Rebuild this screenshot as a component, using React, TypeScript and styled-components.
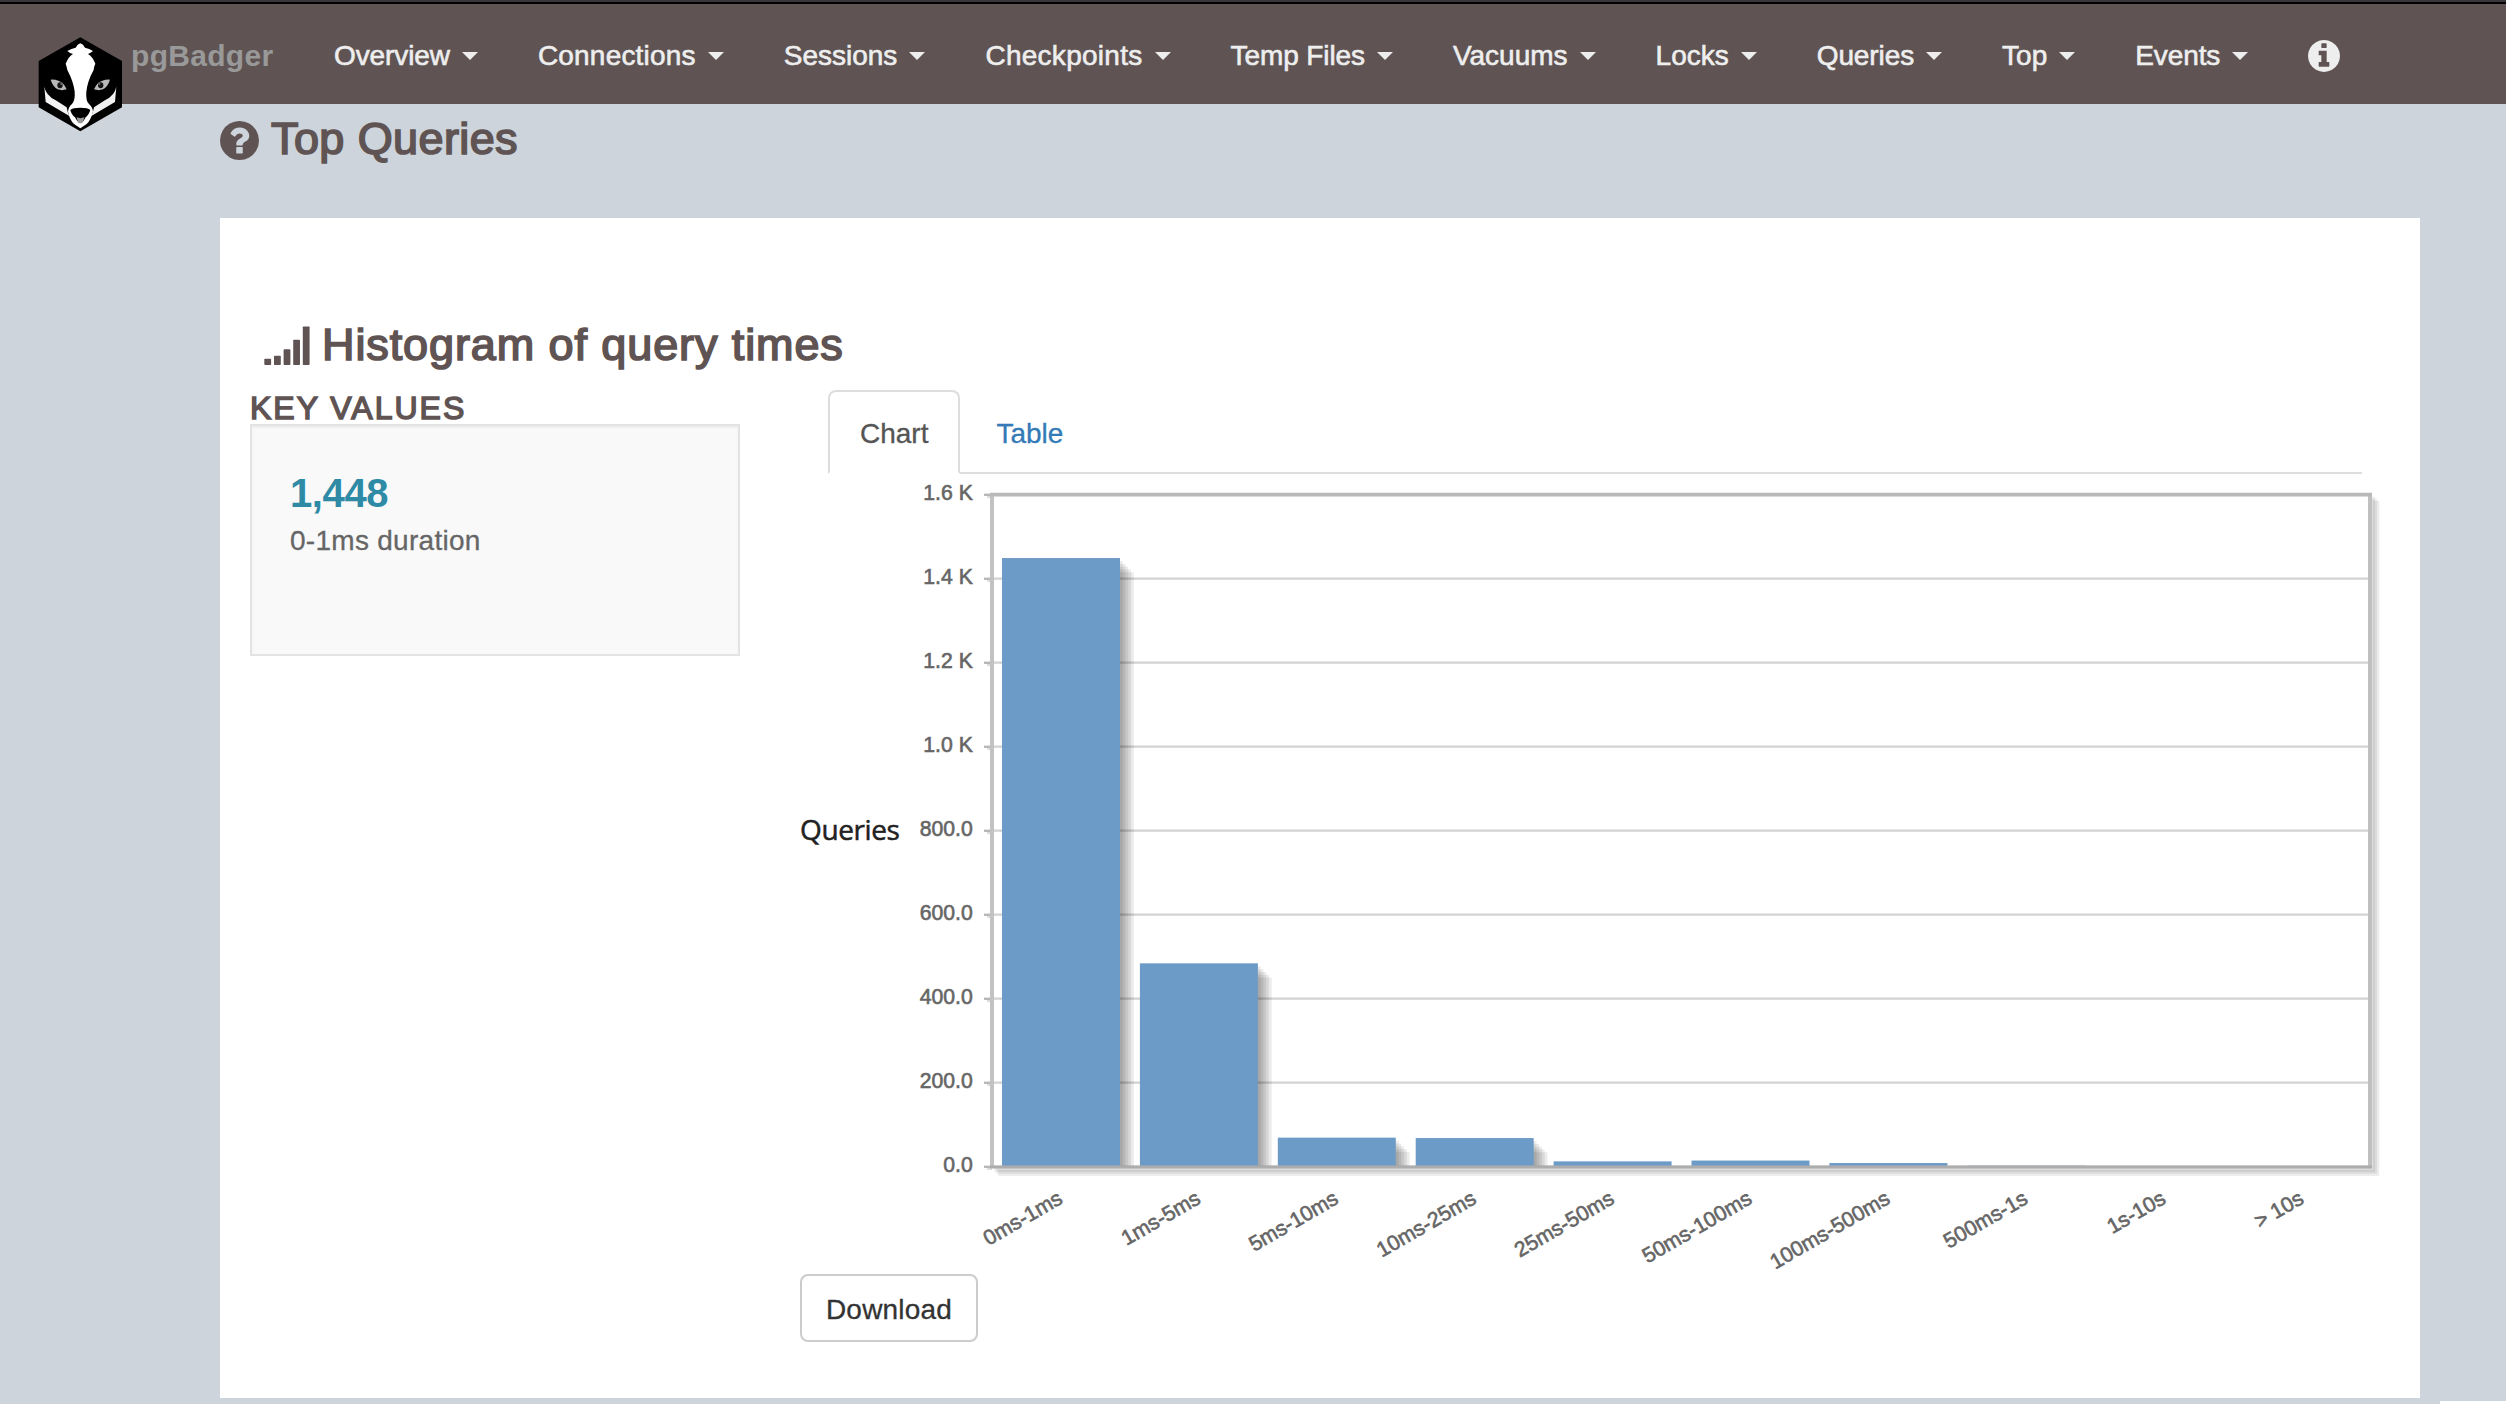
import React from "react";
import styled, { createGlobalStyle } from "styled-components";

const BROWN = "#5f5453";

const GlobalStyle = createGlobalStyle`
  * { box-sizing: border-box; }
  html, body { margin: 0; padding: 0; }
  body {
    background: #cdd4db;
    font-family: "Liberation Sans", Arial, sans-serif;
    font-size: 28px;
    color: #333;
    overflow: hidden;
  }
`;

const Page = styled.div`
  width: 2506px;
  height: 1404px;
  display: flex;
  flex-direction: column;
`;

const Navbar = styled.header`
  position: relative;
  z-index: 1;
  height: 104px;
  flex: none;
  display: flex;
  align-items: center;
  padding: 5px 0 0 131px;
  background: ${BROWN};
  border-top: 2px solid #38343a;
  box-shadow: inset 0 2px 0 #000;
`;

const LogoSlot = styled.a`
  position: absolute;
  left: 36px;
  top: 33px;
  display: block;
  line-height: 0;
`;

const Brand = styled.a`
  width: 173px;
  font-size: 30px;
  font-weight: bold;
  letter-spacing: 0.3px;
  line-height: 40px;
  color: #999;
`;

const NavList = styled.nav`
  display: flex;
  align-items: center;
`;

const NavLink = styled.a<{ $tracking?: number }>`
  display: flex;
  align-items: center;
  padding: 0 30px;
  line-height: 40px;
  letter-spacing: ${(p) => p.$tracking ?? 0}px;
  color: #eee;
  -webkit-text-stroke: 0.6px #eee;
  white-space: nowrap;
`;

const Caret = styled.b`
  margin-left: 12px;
  margin-top: 1px;
  border-top: 8px solid #eee;
  border-left: 8px solid transparent;
  border-right: 8px solid transparent;
`;

const PageTitle = styled.h1`
  display: flex;
  align-items: center;
  gap: 12px;
  margin: 5px 0 49px 220px;
  height: 60px;
  flex: none;
  font-size: 45px;
  font-weight: normal;
  letter-spacing: 0.4px;
  line-height: 60px;
  color: ${BROWN};
  -webkit-text-stroke: 1.7px ${BROWN};
  svg { margin-top: 2px; }
`;

const Panel = styled.main`
  width: 2200px;
  height: 1180px;
  flex: none;
  margin-left: 220px;
  padding: 97px 30px 0;
  background: #fff;
`;

const SectionTitle = styled.h2`
  display: flex;
  align-items: flex-start;
  gap: 12px;
  margin: 0;
  padding-left: 14px;
  height: 59px;
  font-size: 45px;
  font-weight: normal;
  letter-spacing: 0.9px;
  line-height: 60px;
  color: ${BROWN};
  -webkit-text-stroke: 1.7px ${BROWN};
  svg { margin-top: 11px; }
`;

const Columns = styled.div`
  display: flex;
  gap: 60px;
`;

const KeyColumn = styled.aside`
  width: 490px;
  flex: none;
  padding-top: 18px;
`;

const KeyTitle = styled.h4`
  margin: 0;
  font-size: 32px;
  font-weight: normal;
  line-height: 32px;
  letter-spacing: 2px;
  text-transform: uppercase;
  color: ${BROWN};
  -webkit-text-stroke: 1.5px ${BROWN};
`;

const Well = styled.div`
  height: 232px;
  padding: 47px 38px;
  background: #f9f9f9;
  border: 2px solid #e3e3e3;
  box-shadow: inset 0 2px 2px rgba(0, 0, 0, 0.05);
`;

const Figure = styled.div`
  font-size: 40px;
  font-weight: bold;
  line-height: 40px;
  letter-spacing: -0.4px;
  color: #2f8aa6;
`;

const FigureLabel = styled.div`
  margin-top: 8px;
  line-height: 40px;
  letter-spacing: 0.28px;
  color: #666;
  -webkit-text-stroke: 0.3px #666;
`;

const ChartColumn = styled.section`
  width: 1600px;
  flex: none;
  padding-top: 16px;
`;

const Tabs = styled.div`
  display: flex;
  height: 84px;
  width: 1534px;
  margin-left: 28px;
  border-bottom: 2px solid #ddd;
`;

const Tab = styled.a<{ $active?: boolean }>`
  height: 84px;
  padding: 3px 30px 0;
  margin-right: 4px;
  line-height: 78px;
  border: 2px solid ${(p) => (p.$active ? "#ddd" : "transparent")};
  border-bottom: ${(p) => (p.$active ? "2px solid #fff" : "0")};
  border-radius: 8px 8px 0 0;
  color: ${(p) => (p.$active ? "#555" : "#337ab7")};
  -webkit-text-stroke: 0.3px currentColor;
`;

const ChartRow = styled.div`
  display: flex;
  height: 800px;
`;

const AxisLabel = styled.div`
  width: 110px;
  padding-top: 335px;
  font-family: "Open Sans", "Noto Sans", sans-serif;
  font-size: 28px;
  line-height: 40px;
  letter-spacing: -0.4px;
  color: #222;
  -webkit-text-stroke: 0.5px #222;
`;

const Plot = styled.svg`
  display: block;
  text {
    font-family: "Liberation Sans", Arial, sans-serif;
    font-size: 21.2px;
    fill: #666;
    stroke: #666;
    stroke-width: 0.6px;
  }
`;

const DownloadButton = styled.button`
  display: block;
  width: 178px;
  height: 68px;
  padding: 3px 0 0;
  background: #fff;
  border: 2px solid #ccc;
  border-radius: 8px;
  font-family: inherit;
  font-size: 28px;
  line-height: 40px;
  letter-spacing: 0.2px;
  color: #333;
  -webkit-text-stroke: 0.3px #333;
`;

const Footer = styled.footer`
  display: flex;
  justify-content: flex-end;
  padding-top: 3px;
`;

const FooterCorner = styled.div`
  width: 66px;
  height: 3px;
  background: #fff;
`;

const CIRCLE =
  "M1664 896q0 209-103 385.5t-279.5 279.5-385.5 103-385.5-103-279.5-279.5-103-385.5 103-385.5 279.5-279.5 385.5-103 385.5 103 279.5 279.5 103 385.5z";

const QuestionIcon = () => (
  <svg width="39" height="39" viewBox="128 128 1536 1536" fill={BROWN} fillRule="evenodd" stroke="none">
    <path d={"M1024 1376v-192q0-14-9-23t-23-9h-192q-14 0-23 9t-9 23v192q0 14 9 23t23 9h192q14 0 23-9t9-23zM1280 704q0-88-55.5-163t-138.5-116-170-41q-243 0-371 213-15 24 8 42l132 100q7 6 19 6 16 0 25-12 53-68 86-92 34-24 86-24 48 0 85.5 26t37.5 59q0 38-20 61t-68 45q-63 28-115.5 86.5t-52.5 125.5v36q0 14 9 23t23 9h192q14 0 23-9t9-23q0-19 21.5-49.5t54.5-49.5q32-18 49-28.5t46-35 44.5-48 28-60.5 12.5-81z" + CIRCLE} />
  </svg>
);

const InfoIcon = () => (
  <svg width="32" height="32" viewBox="128 128 1536 1536" fill="#eee" fillRule="evenodd" stroke="none">
    <path d={"M1152 1376v-160q0-14-9-23t-23-9h-96v-512q0-14-9-23t-23-9h-320q-14 0-23 9t-9 23v160q0 14 9 23t23 9h96v320h-96q-14 0-23 9t-9 23v160q0 14 9 23t23 9h448q14 0 23-9t9-23zM1024 480v-160q0-14-9-23t-23-9h-192q-14 0-23 9t-9 23v160q0 14 9 23t23 9h192q14 0 23-9t9-23z" + CIRCLE} />
  </svg>
);

const SignalIcon = () => (
  <svg width="46" height="39" viewBox="0 0 46 39" fill={BROWN} stroke="none">
    <rect x="0.3" y="32.8" width="6.8" height="6.2" rx="0.8" />
    <rect x="10" y="29.8" width="6.8" height="9.2" rx="0.8" />
    <rect x="19.6" y="23.2" width="6.8" height="15.8" rx="0.8" />
    <rect x="29.2" y="13.7" width="6.8" height="25.3" rx="0.8" />
    <rect x="38.8" y="0.5" width="6.8" height="38.5" rx="0.8" />
  </svg>
);

const BadgerLogo = () => (
  <svg width="88" height="98" viewBox="48 45 264 294">
    <path d="M181 52 L306 123 V262 L181 334 L56 262 V123 Z" fill="#000" />
    <path
      d="M181 70 Q190 73 195 83 Q208 85 219 93 Q212 99 204 102 Q217 109 226 131 Q222 139 221 150 Q202 184 199 215 Q197 243 207 252 Q218 262 219 275 Q212 301 200 312 L181 325 L162 312 Q149 299 144 275 Q145 261 156 252 Q166 242 164 214 Q160 184 142 150 Q140 139 137 131 Q146 109 159 102 Q150 100 142 93 Q154 85 167 83 Q172 73 181 70 Z"
      fill="#fff"
    />
    <path d="M73 200 Q78 226 106 240 L140 262 Q142 276 148 288 L77 246 Z" fill="#f2f2f2" />
    <path d="M289 200 Q284 226 256 240 L222 262 Q220 276 214 288 L285 246 Z" fill="#f2f2f2" />
    <path d="M151 270 Q158 263 181 263 Q204 263 211 270 Q206 286 197 292 L190 304 H172 L165 292 Q155 286 151 270 Z" fill="#000" />
    <path d="M170 292 Q181 297 193 292 L188 308 Q181 312 174 308 Z" fill="#999" />
    <path d="M92 179 Q104 178 117 183 Q132 189 140 208 Q126 213 113 208 Q98 199 92 179 Z" fill="#b9b9b9" />
    <path d="M270 179 Q258 178 245 183 Q230 189 222 208 Q236 213 249 208 Q264 199 270 179 Z" fill="#b9b9b9" />
    <ellipse cx="120" cy="196" rx="8" ry="9" fill="#151515" />
    <ellipse cx="242" cy="196" rx="8" ry="9" fill="#151515" />
    <circle cx="124" cy="192" r="3" fill="#777" />
    <circle cx="238" cy="192" r="3" fill="#777" />
  </svg>
);

const MENUS = [
  { name: "Overview", tracking: -0.1 },
  { name: "Connections", tracking: 0.2 },
  { name: "Sessions", tracking: 0 },
  { name: "Checkpoints", tracking: 0.28 },
  { name: "Temp Files", tracking: -0.1 },
  { name: "Vacuums", tracking: 0 },
  { name: "Locks", tracking: 0 },
  { name: "Queries", tracking: -0.1 },
  { name: "Top", tracking: 0 },
  { name: "Events", tracking: -0.1 },
];

const BUCKETS = [
  { label: "0ms-1ms", value: 1448 },
  { label: "1ms-5ms", value: 483 },
  { label: "5ms-10ms", value: 68 },
  { label: "10ms-25ms", value: 67 },
  { label: "25ms-50ms", value: 11.5 },
  { label: "50ms-100ms", value: 13.5 },
  { label: "100ms-500ms", value: 7.5 },
  { label: "500ms-1s", value: 3 },
  { label: "1s-10s", value: 0 },
  { label: "> 10s", value: 0 },
];

const Y_TICKS = ["0.0", "200.0", "400.0", "600.0", "800.0", "1.0 K", "1.2 K", "1.4 K", "1.6 K"];

/* Plot geometry, in the svg's own pixels. */
const LEFT = 82;
const RIGHT = 1460;
const BASE = 692.6;
const STEP = 84;
const TOP = BASE - 8 * STEP;
const PITCH = 137.9;
const BAR_WIDTH = 118;

const Histogram = () => (
  <Plot width="1490" height="800" viewBox="0 0 1490 800">
    <defs>
      <clipPath id="plot-area">
        <rect x={LEFT} y={TOP} width={RIGHT - LEFT} height={BASE - TOP} />
      </clipPath>
    </defs>
    {[1, 2, 3].map((i) => (
      <path
        key={i}
        d={`M${LEFT + 2.1 * i} ${BASE + 2.1 * i} H${RIGHT + 2.1 * i} V${TOP + 2.1 * i}`}
        fill="none"
        stroke="rgba(0,0,0,0.07)"
        strokeWidth="6"
      />
    ))}
    <rect x={LEFT} y={TOP} width={RIGHT - LEFT} height={BASE - TOP} fill="#fff" />
    {Y_TICKS.map((t, i) => {
      const y = BASE - i * STEP;
      return (
        <g key={t}>
          <line x1={LEFT} x2={RIGHT} y1={y} y2={y} stroke="#d2d2d2" strokeWidth="2.4" />
          <line x1={LEFT - 8} x2={LEFT} y1={y + 0.2} y2={y + 0.2} stroke="#b8b8b8" strokeWidth="2.4" />
          <line x1={LEFT - 5} x2={LEFT} y1={y + 2.4} y2={y + 2.4} stroke="#ddd" strokeWidth="2" />
          <text x={62.8} y={y + 5.6} textAnchor="end">{t}</text>
        </g>
      );
    })}
    <path d={`M${LEFT} ${TOP} V${BASE}`} stroke="#c2c2c2" strokeWidth="4" />
    <path d={`M${RIGHT} ${TOP} V${BASE}`} stroke="#c0c0c0" strokeWidth="4" />
    <path d={`M${LEFT - 2} ${TOP} H${RIGHT + 2}`} stroke="#b9b9b9" strokeWidth="3.6" />
    <g clipPath="url(#plot-area)">
      {BUCKETS.map((b, n) => {
        const h = b.value * 0.42;
        const x = 92 + n * PITCH;
        return (
          <g key={b.label}>
            {h > 10 &&
              [1, 2, 3, 4, 5].map((i) => (
                <rect key={i} x={x + 2.75 * i} y={BASE - h + 2.75 * i} width={BAR_WIDTH} height={h} fill="rgba(0,0,0,0.08)" />
              ))}
            {h > 0 && (
              <rect x={x} y={BASE - h - 0.4} width={BAR_WIDTH} height={h} fill="#6d9bc8" fillOpacity={h < 2 ? 0.3 : 1} />
            )}
          </g>
        );
      })}
    </g>
    <path d={`M${LEFT - 2} ${BASE + 0.4} H${RIGHT + 2}`} stroke="#adadad" strokeWidth="3" />
    {BUCKETS.map((b, n) => (
      <text key={b.label} textAnchor="end" transform={`translate(${154 + n * PITCH} 728.5) rotate(-30)`}>
        {b.label}
      </text>
    ))}
  </Plot>
);

export default function App() {
  return (
    <Page>
      <GlobalStyle />
      <Navbar>
        <LogoSlot><BadgerLogo /></LogoSlot>
        <Brand>pgBadger</Brand>
        <NavList>
          {MENUS.map((m) => (
            <NavLink key={m.name} $tracking={m.tracking}>{m.name}<Caret /></NavLink>
          ))}
          <NavLink><InfoIcon /></NavLink>
        </NavList>
      </Navbar>
      <PageTitle><QuestionIcon />Top Queries</PageTitle>
      <Panel>
        <SectionTitle><SignalIcon />Histogram of query times</SectionTitle>
        <Columns>
          <KeyColumn>
            <KeyTitle>Key values</KeyTitle>
            <Well>
              <Figure>1,448</Figure>
              <FigureLabel>0-1ms duration</FigureLabel>
            </Well>
          </KeyColumn>
          <ChartColumn>
            <Tabs>
              <Tab $active>Chart</Tab>
              <Tab>Table</Tab>
            </Tabs>
            <ChartRow>
              <AxisLabel>Queries</AxisLabel>
              <Histogram />
            </ChartRow>
            <DownloadButton>Download</DownloadButton>
          </ChartColumn>
        </Columns>
      </Panel>
      <Footer><FooterCorner /></Footer>
    </Page>
  );
}
